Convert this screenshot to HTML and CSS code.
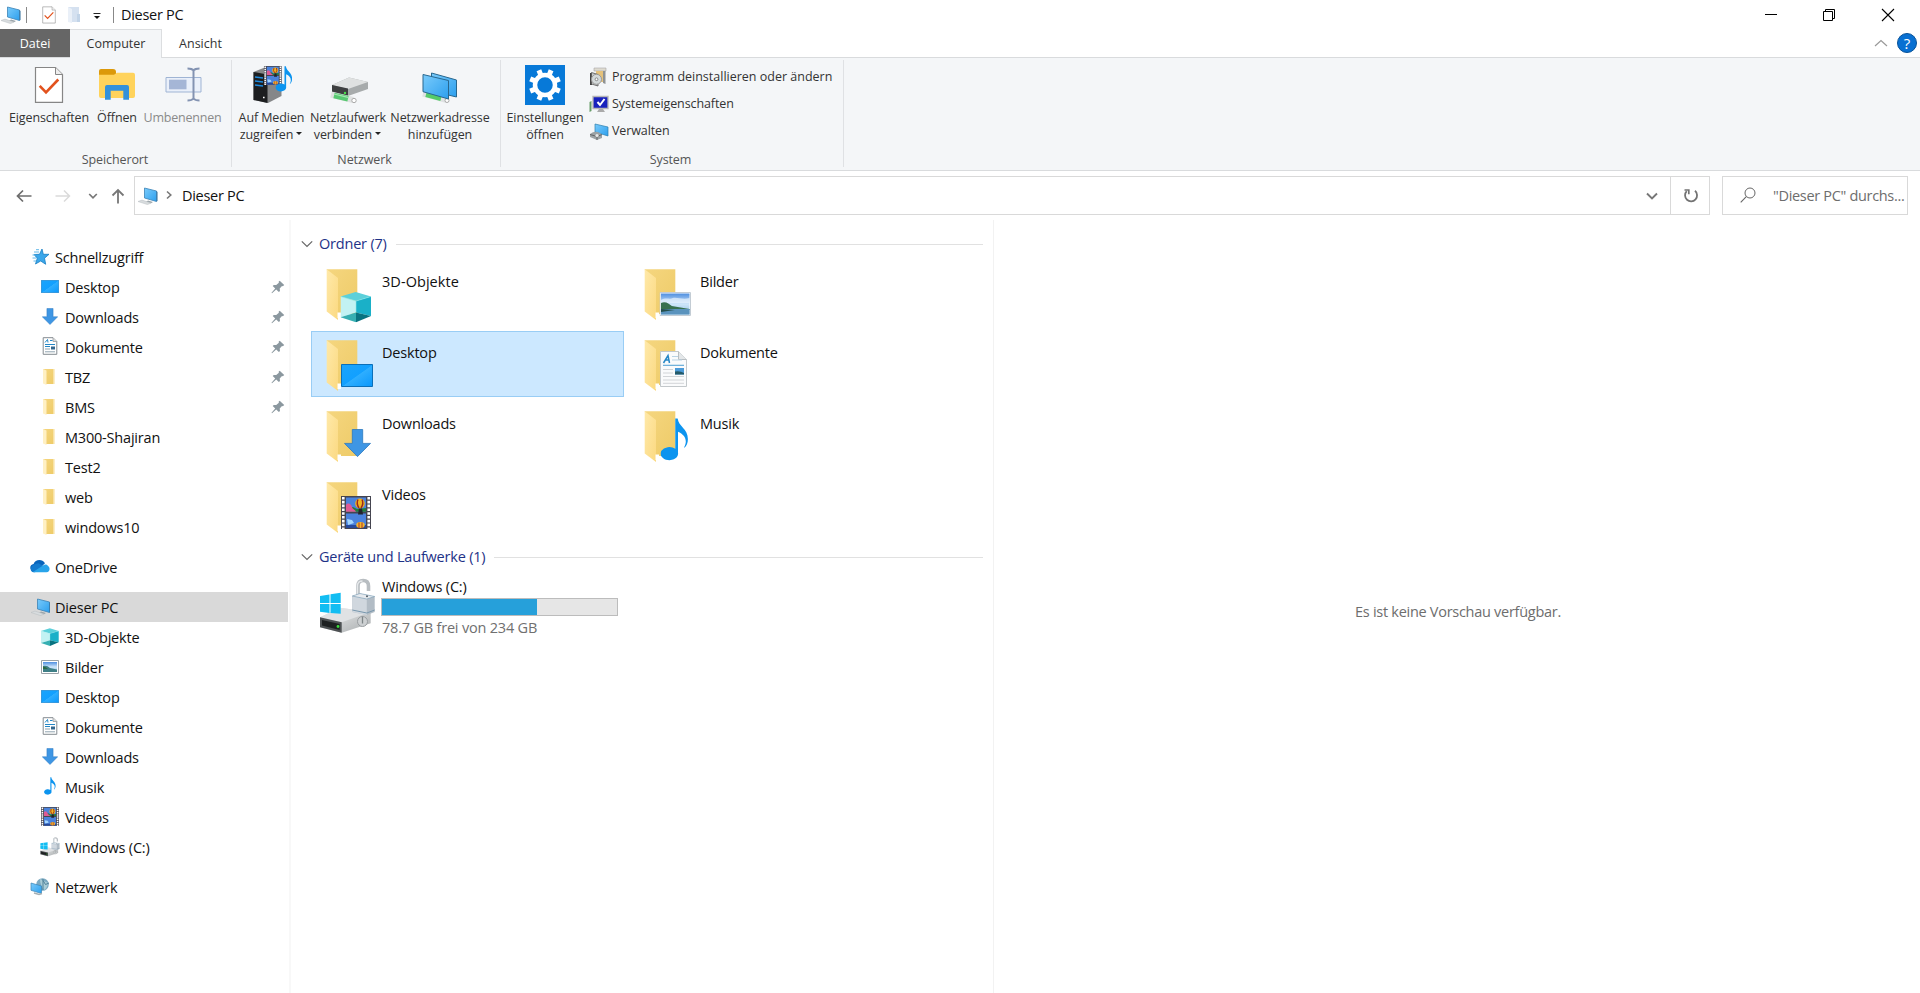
FILE: index.html
```html
<!DOCTYPE html>
<html lang="de">
<head>
<meta charset="utf-8">
<title>Dieser PC</title>
<link rel="stylesheet" href="styles.css">
</head>
<body>
<svg class="sprite" aria-hidden="true">
  <defs>
    <linearGradient id="gBack" x1="0" y1="0" x2="1" y2="1"><stop offset="0" stop-color="#f5d67f"/><stop offset="1" stop-color="#eecb68"/></linearGradient>
    <linearGradient id="gFlap" x1="0" y1="0" x2="1" y2="1"><stop offset="0" stop-color="#ffe9a9"/><stop offset="1" stop-color="#fbd981"/></linearGradient>
    <linearGradient id="gBlue" x1="0" y1="0" x2="1" y2="1"><stop offset="0" stop-color="#1ba4fb"/><stop offset=".5" stop-color="#12a0ff"/><stop offset=".52" stop-color="#2eaeff"/><stop offset="1" stop-color="#0a97fb"/></linearGradient>
    <linearGradient id="gScreen" x1="0" y1="0" x2="1" y2="1"><stop offset="0" stop-color="#7acbfb"/><stop offset="1" stop-color="#2c9fee"/></linearGradient>
    <linearGradient id="gMetal" x1="0" y1="0" x2="1" y2="1"><stop offset="0" stop-color="#f2f3f3"/><stop offset="1" stop-color="#a9adaf"/></linearGradient>
    <linearGradient id="gSky" x1="0" y1="0" x2="0" y2="1"><stop offset="0" stop-color="#4f8fe0"/><stop offset=".5" stop-color="#cfe6fa"/><stop offset="1" stop-color="#8fc0e6"/></linearGradient>
  </defs>
  <symbol id="pc" viewBox="0 0 20 18">
    <path d="M6.500 1 18.500 4V14.500L6.500 11z" fill="url(#gScreen)" stroke="#3c83b5" stroke-width=".8"/>
    <path d="M18.500 4 19.500 5V14l-1 .5z" fill="#2c6c99"/>
    <path d="M10 13.500l5 1.500-2 1.300-5-1.400z" fill="#9aa4aa"/>
    <path d="M0 14.500l4-1.400L13 16l-3.500 1.600z" fill="#d8dcde" stroke="#b7bdc1" stroke-width=".5"/>
  </symbol>
  <symbol id="check" viewBox="0 0 40 40">
    <path d="M6.500 2.500H26.500L33.500 9.500V37.300H6.500z" fill="#fff" stroke="#868686" stroke-width="1.200"/>
    <path d="M26.500 2.500V9.500H33.500" fill="#eee" stroke="#868686"/>
    <path d="M10.700 20.800 17 27.300 29.300 14.500" fill="none" stroke="#e2521d" stroke-width="2.600"/>
  </symbol>
  <symbol id="mini-folder" viewBox="0 0 20 20">
    <path d="M3 2H13.500V17H6z" fill="url(#gBack)"/><path d="M3 2l3.500 1.500V18L3 16.500z" fill="#fff0c4"/>
    <path d="M14 2v15" stroke="#f8dd92"/>
  </symbol>
  <symbol id="folder" viewBox="0 0 70 64">
    <path d="M14.700 8.300H45.300V53H25z" fill="url(#gBack)"/>
    <path d="M14.700 8.300 26 17V59L14.700 50.500z" fill="url(#gFlap)"/>
    <path d="M25.500 51.500h3.500V57h-3.500z" fill="#fff"/>
  </symbol>
  <symbol id="cube" viewBox="0 0 31 31">
    <path d="M15.200.5 30.500 5 15.500 9.500 0 5z" fill="#5cd0da"/>
    <path d="M0 5 15.500 9.500V21L0 25.800z" fill="#c2f2f3"/>
    <path d="M15.500 9.500 30.500 5V24.500L15.500 21z" fill="#1ab0c8"/>
    <path d="M0 25.800 15.500 21V30.800z" fill="#36afb2"/><path d="M15.500 21 30.500 24.500 15.500 30.800z" fill="#087380"/>
    <path d="M15.500 9.500V21M0 5 15.500 9.500 30.500 5" stroke="#8ee7ea" stroke-width=".6" fill="none"/>
  </symbol>
  <symbol id="desk" viewBox="0 0 32 23" preserveAspectRatio="none"><path d="M.5.5h31v22H.5z" fill="url(#gBlue)" stroke="#0b6fb8"/></symbol>
  <symbol id="down" viewBox="0 0 27 28"><path d="M8.300.5h10.400V14.400H26.500L13.500 27.600.5 14.400H8.300z" fill="#3e96e4" stroke="#2b78bf" stroke-width=".8"/></symbol>
  <symbol id="film" viewBox="0 0 30 33" preserveAspectRatio="none">
    <path d="M0 0h30v33H0z" fill="#454550"/>
    <path d="M2.300 1v32M27.700 1v32" stroke="#fff" stroke-width="2.600" stroke-dasharray="2.600 1.200"/>
    <path d="M5 1.500h20v14.200H5zM5 17.500h20V32H5z" fill="#4a82dc"/>
    <path d="M5 11h7l4 2 9-1v3.700H5z" fill="#247d3a"/><path d="M5 9c2-3 5-1 6 2s3 2 4 4.700H5z" fill="#de5a96"/>
    <ellipse cx="19" cy="7.500" rx="4.800" ry="5" fill="#f0b51e"/><path d="M17 3.500q-2 4 1 8.500M21 3.500q2 4-1 8.500" stroke="#9b281e" stroke-width="1.500" fill="none"/>
    <path d="M18 12.500h3l1 6h-5z" fill="#23242c"/><path d="M6 23l5 1 2 3-6 2z" fill="#a4d7ff"/>
    <path d="M5 29h20v3H5z" fill="#274a9c"/><ellipse cx="19.500" cy="29" rx="4.300" ry="3" fill="#f1b62e"/><path d="M18 26.500v5.500M21 26.500v5.500" stroke="#b13727"/>
  </symbol>
  <symbol id="picture" viewBox="0 0 32 24" preserveAspectRatio="none">
    <path d="M.5.5h31v23H.5z" fill="#fff" stroke="#c3ccd4"/><path d="M1.500 1.500h29v21h-29z" fill="url(#gSky)"/>
    <path d="M1.500 8c5-3 9 0 12-2 5-1 10 2 17 0v5h-29z" fill="#e9f4fd" opacity=".7"/>
    <path d="M1.500 11c5-2 8 1 11 3l18 3v1h-29z" fill="#37704f"/><path d="M1.500 17h29v5.500h-29z" fill="#5a93bd"/><path d="M1.500 17l14 1-14 2z" fill="#244f4c"/>
  </symbol>
  <symbol id="mini-picture" viewBox="0 0 18 14">
    <path d="M.5.5h17v13H.5z" fill="#fff" stroke="#9aa2a8"/><path d="M2 2h14v10H2z" fill="url(#gSky)"/>
    <path d="M2 6q4-1 7 2l7 1.500V12H2z" fill="#3e7f86"/><path d="M2 6.500q3 0 5 2.500H2z" fill="#2d6a45"/>
  </symbol>
  <symbol id="doc" viewBox="0 0 27 36">
    <path d="M.5.500H18.500L26.500 8.500V35.500H.5z" fill="#fafbfc" stroke="#c3c8cb"/><path d="M18.500.5V8.500h8" fill="#e4e7e9" stroke="#b9bec1"/>
    <path d="M3.500 12 8 4.500 9.500 12M5.500 9h4" fill="none" stroke="#2587c6" stroke-width="1.500"/>
    <path d="M12 5.500h6M12 9h10" stroke="#b9d3e4"/><path d="M3 14.300h21" stroke="#59a5d5" stroke-width="1.100"/>
    <path d="M3 18.500h10M3 22h10M3 25.500h21M3 29h21M3 32.300h21" stroke="#d2d5d8"/>
    <path d="M15 17h9v6.500h-9z" fill="#4b9bd9"/><path d="M15 20.500q5-1 9 1.500v1.500h-9z" fill="#255a68"/>
  </symbol>
  <symbol id="mini-doc" viewBox="0 0 16 18">
    <path d="M1.200.7H11l3.800 3.800V17.300H1.200z" fill="#fff" stroke="#848b90"/><path d="M11 .7v3.800h3.800" fill="#ddd" stroke="#899095" stroke-width=".7"/>
    <path d="M3 5.500 5.500 2.500 6 5.500M8 3.500h2.500M3 7.500h10M3 9.500h5" stroke="#2587c6" fill="none"/><path d="M9 9.500h4v3H9z" fill="#34678e"/><path d="M3 12h5M3 14.800h10" stroke="#8fa3af"/>
  </symbol>
  <symbol id="note" viewBox="0 0 28 44">
    <path d="M14.800.6h2.400C18.200 9 27.700 11 27.700 21.500c0 4-1.200 6.800-3.400 9-.4-.3-.5-.6-.2-1 3.500-7 .4-12.500-6.500-15.500V35.500A9 6.700 0 1 1 14.800 31.500z" fill="#0c94ef"/>
  </symbol>
  <symbol id="drive" viewBox="0 0 70 64">
    <path d="M8 44.300 28 34.700 58.700 39V50.300L29.700 59.700 8 54.300z" fill="url(#gMetal)"/>
    <path d="M8 44.300 28 34.700 58.700 39 29.700 49.300z" fill="#e0e2e4"/>
    <path d="M8 44.300 29.700 49.300V59.700L8 54.300z" fill="#4d5153"/><path d="M10 47 27.700 51V57L10 52.500z" fill="#1d2021"/><circle cx="26" cy="53.500" r="1.400" fill="#3ddb3d"/>
    <path d="M8 23 17.500 21.500V30H8zM18.500 21.300 28.700 19.700V30H18.500zM8 31h9.500v9L8 38.700zM18.500 31h10.200v9.700L18.500 40.100z" fill="#12bdf2"/>
    <path d="M46 23V13q0-5.500 5.200-5.500t5.300 5.500v5" fill="none" stroke="#b8bdc1" stroke-width="3.600"/><path d="M45.500 23V13q0-5 5-5" fill="none" stroke="#e5e8ea" stroke-width="1.400"/>
    <path d="M40.300 23 48 20.500 62.700 23.500V39L55 42 40.300 39z" fill="#b2bcc5"/><path d="M40.300 23l14.500 3V42l-14.500-3z" fill="#d0d7de"/><path d="M40.300 23 48 20.500l14.700 3-8 2.500z" fill="#e6eaee" stroke="#789cb5" stroke-width=".6"/>
    <path d="M40.300 37l14.500 3 7.900-3" stroke="#7897ad" fill="none"/><circle cx="55" cy="23.300" r="1" fill="#4e5b65"/>
    <circle cx="50.500" cy="48.500" r="5" fill="#cdd0d2" stroke="#999da0"/><path d="M50.500 43.500v7" stroke="#7e8588" stroke-width="1.300"/>
  </symbol>
  <symbol id="star" viewBox="0 0 20 20">
    <path d="M12 2 13.300 7.300h5.700L14.500 11.200 15.700 17.300 10.700 14 5.500 17 7.300 11.200 4 7.500 9.500 7.300z" fill="#3ba7ea" stroke="#187fc4" stroke-width=".8"/>
    <path d="M4 5h5M2.500 8h3M2.500 11h4M3.500 14h2.500M6 2.700h3" stroke="#62b8e9"/>
  </symbol>
  <symbol id="cloud" viewBox="0 0 20 14">
    <path d="M3.600 5C5 .5 12-.9 15 4.300L11 8 3.500 12C-1 11-.6 5.500 3.600 5z" fill="#0864bb"/>
    <path d="M8.500 4.200 15 8 5 13.200H3.500C0 13 0 8 2.500 6.500 4 5 7 4.600 8.500 4.200z" fill="#137ace"/>
    <path d="M3 13 13 6.500c2-1.500 4-1.300 5 .5 2.500 1.500 2 6-1.500 6.300H4.500z" fill="#29a4ea"/>
  </symbol>
  <symbol id="network" viewBox="0 0 20 20">
    <circle cx="12.500" cy="7.500" r="6.300" fill="#7ba9c1"/><path d="M10 2q4 2 8 4-1 6-4 7Q10 8 10 2z" fill="#a9ccd6"/><path d="M13 3.500l2.500 4L19 6M13 2v11" stroke="#4f8199" fill="none"/>
    <path d="M1 6 11.500 9V16.500L1 13.300z" fill="url(#gScreen)" stroke="#3b84b5" stroke-width=".7"/><path d="M4 16l5 1.500 3-1" stroke="#a5afb4" fill="none" stroke-width="1.500"/>
  </symbol>
  <symbol id="pin" viewBox="0 0 14 14"><path d="M8.700.7 13.200 5 11.900 6.200 11 5.900 8.700 8.500 9 11 7.900 12 5.200 9.400 1 13.200.5 12.800 4.200 8.500 1.700 6 2.800 4.900 5.200 5.100 7.900 2.700 7.600 1.800z" fill="#8b989f"/></symbol>
  <symbol id="chev" viewBox="0 0 12 12"><path d="M.8 3.300 6 8.500 11.200 3.300" fill="none" stroke="currentColor" stroke-width="1.200"/></symbol>
</svg>

<div class="window">
  <header class="titlebar">
    <svg class="t-pc"><use href="#pc"/></svg><i class="bar"></i>
    <svg class="t-check" viewBox="5 1 30 38"><use href="#check" width="40" height="40"/></svg>
    <svg class="t-folder" viewBox="0 0 14 18"><path d="M1 1h11v15H1z" fill="#d5e1f0"/><path d="M1 1l4 2v14l-4-1z" fill="#eaf0f8"/><path d="M10 8h3v8h-3z" fill="#c2d4e8"/></svg>
    <svg class="t-caret" viewBox="0 0 8 8"><path d="M.5 1.500h7" stroke="#222"/><path d="M1 4h6L4 7z" fill="#111"/></svg><i class="bar bar2"></i>
    <span class="title">Dieser PC</span>
    <div class="controls">
      <svg viewBox="0 0 14 14"><path d="M2 6.500h12" stroke="#000"/></svg>
      <svg viewBox="0 0 14 14"><path d="M1.500 3.500h9v9h-9zM3.500 3.500v-2h9v9h-2" fill="none" stroke="#000"/></svg>
      <svg viewBox="0 0 14 14"><path d="M1 1l12 12M13 1 1 13" stroke="#000" stroke-width="1.100"/></svg>
    </div>
  </header>
  <nav class="tabs">
    <span class="tab file">Datei</span><span class="tab active">Computer</span><span class="tab view">Ansicht</span>
    <div class="tab-end"><svg class="up-chev" viewBox="0 0 14 8"><path d="M1 7l6-5.500L13 7" fill="none" stroke="#999" stroke-width="1.200"/></svg><span class="help">?</span></div>
  </nav>
  <section class="ribbon">
    <div class="group g1">
      <div class="tools">
        <div class="tool w88"><svg class="big"><use href="#check"/></svg><span>Eigenschaften</span></div>
        <div class="tool w48"><svg class="big" viewBox="0 0 40 40"><path d="M2 6q0-2 2-2H16q3 0 3 3v3H2z" fill="#dc990a"/><path d="M2 9.700H17l3-2H36q2 0 2 2V31q0 2-2 2H4q-2 0-2-2z" fill="#ffd35c"/><path d="M8 34.700V22q0-2 2-2H30q2 0 2 2V34.700H26.300V25.700H13.700V34.700z" fill="#3391db"/></svg><span>Öffnen</span></div>
        <div class="tool w83 off"><svg class="big" viewBox="0 0 40 40"><path d="M3 12.500H38V27H3z" fill="#eaf0fa" stroke="#9fb4d4"/><path d="M6 14.700H23.500v9.600H6z" fill="#a5b6d6"/><path d="M24.500 3.500q4.500 0 6 2 1.500-2 6-2M24.500 35.500q4.500 0 6-2 1.500 2 6 2M30.500 5.500v28" fill="none" stroke="#8393b2" stroke-width="2"/></svg><span>Umbenennen</span></div>
      </div><div class="caption">Speicherort</div>
    </div>
    <div class="group g2">
      <div class="tools">
        <div class="tool w73"><svg class="big" viewBox="0 0 40 40"><path d="M1.500 7 14 2 29.500 5V31L16 38 1.500 35z" fill="#858789"/><path d="M1.500 7 15.500 9.500V38L1.500 35z" fill="#1c1e20"/><path d="M3 12l8 1M3 16l8 1M3 20l8 1" stroke="#1e8be0" stroke-width="1.300"/><path d="M11 32.500h1.600" stroke="#fff" stroke-width="1.500"/><use href="#film" x="11.800" y="1" width="18" height="19"/><use href="#note" x="23.500" y="1" width="17" height="26"/></svg><span>Auf Medien<br>zugreifen <b class="caret"></b></span></div>
        <div class="tool w80"><svg class="big" viewBox="0 0 40 40"><path d="M4 20 21 12.500 40 17V24L20 31 4 27z" fill="#a7abac"/><path d="M4 20 21 12.500 40 17 20 24z" fill="#dfe1e1"/><path d="M4 20 20 23.500V31L4 27z" fill="#3d3f40"/><circle cx="17" cy="28" r="1.200" fill="#4be14b"/><path d="M3 29.500 25 35" stroke="#e0e2e2" stroke-width="6"/><path d="M6 30.500 20 33.800" stroke="#58c872" stroke-width="5.500"/><path d="M6 29 20 32.300" stroke="#a4e9b0" stroke-width="1.200"/><circle cx="26" cy="35.500" r="2.200" fill="#fff" stroke="#aaa"/></svg><span>Netzlaufwerk<br>verbinden <b class="caret"></b></span></div>
        <div class="tool w104"><svg class="big" viewBox="0 0 40 40"><path d="M3 28.500 27 35" stroke="#dfe2e3" stroke-width="6"/><path d="M6 29.500 21 33.500" stroke="#55cb6a" stroke-width="5"/><circle cx="27" cy="35.500" r="2" fill="#fff" stroke="#aaa"/><path d="M11.500 8 36.500 15V32L11.500 26z" fill="url(#gScreen)" stroke="#28678e"/><path d="M3 9.500 28.500 15.500V34L3 26.700z" fill="url(#gScreen)" stroke="#28678e"/></svg><span>Netzwerkadresse<br>hinzufügen</span></div>
      </div><div class="caption">Netzwerk</div>
    </div>
    <div class="group g3">
      <div class="tools">
        <div class="tool w82"><svg class="big" viewBox="0 0 40 40"><path d="M0 0h40v40H0z" fill="#0779d8"/><g stroke="#fff" stroke-width="5"><path d="M20 4v32" transform="rotate(22.500 20 20)"/><path d="M20 4v32" transform="rotate(67.500 20 20)"/><path d="M20 4v32" transform="rotate(112.500 20 20)"/><path d="M20 4v32" transform="rotate(157.500 20 20)"/></g><circle cx="20" cy="20" r="10" fill="#0779d8" stroke="#fff" stroke-width="4.500"/></svg><span>Einstellungen<br>öffnen</span></div>
        <div class="list">
          <div><svg viewBox="0 0 20 20"><path d="M5 1h12v3H5z" fill="#dedbd0" stroke="#aaa" stroke-width=".6"/><path d="M7 4h9v11H7z" fill="#e5c27b"/><path d="M14 4h2.500v13l-2.500-1z" fill="#8f9395"/><path d="M1 6h2v12H1z" fill="#444"/><path d="M2.500 5.500 9 7.500V19L2.500 17z" fill="#c7caca" stroke="#555" stroke-width=".8"/><circle cx="7.500" cy="12.300" r="5" fill="#d4dadb" stroke="#999"/><circle cx="7.500" cy="12.300" r="1.400" fill="#fff" stroke="#888"/></svg><span class="wide">Programm deinstallieren oder ändern</span></div>
          <div><svg viewBox="0 0 20 20"><path d="M.5 8l2-1v10l-2 1z" fill="#679c69"/><path d="M4 2.500h15v12H4z" fill="#1721bd" stroke="#b6b6b6" stroke-width="1.300"/><path d="M8.500 8l2.500 3 4.500-6" fill="none" stroke="#fff" stroke-width="2"/><path d="M10 15h4l2 3H8z" fill="#aaa"/></svg><span>Systemeigenschaften</span></div>
          <div><svg viewBox="0 0 20 20"><path d="M6 3 19 6V15L6 11z" fill="url(#gScreen)" stroke="#2b7eae" stroke-width=".7"/><path d="M1 13q5-4 10-1l2 2v3l-5 2-7-3z" fill="#9ba2a5"/><path d="M1 13.500l7 2 5-2M8 15.500V19" stroke="#555" fill="none" stroke-width=".8"/><circle cx="8" cy="14.500" r="1.600" fill="#e7e9e9"/></svg><span>Verwalten</span></div>
        </div>
      </div><div class="caption">System</div>
    </div>
  </section>
  <section class="address-row">
    <svg class="arrow back" viewBox="0 0 16 14"><path d="M15.500 7H1.500M7 1.500 1.500 7 7 12.500" fill="none" stroke="#6d6d6d" stroke-width="1.700"/></svg>
    <svg class="arrow fwd" viewBox="0 0 16 14"><path d="M.5 7H14.500M9 1.500 14.500 7 9 12.500" fill="none" stroke="#dadada" stroke-width="1.500"/></svg>
    <svg class="recent" viewBox="0 0 10 10"><path d="M1.200 3 5 6.800 8.800 3" fill="none" stroke="#777" stroke-width="1.700"/></svg>
    <svg class="up" viewBox="0 0 14 16"><path d="M7 15.500V2M1.500 7.500 7 2 12.500 7.500" fill="none" stroke="#777" stroke-width="1.800"/></svg>
    <div class="address">
      <svg class="a-pc"><use href="#pc"/></svg>
      <svg class="a-chev" viewBox="0 0 8 10"><path d="M2 1.500 5.800 5 2 8.500" fill="none" stroke="#777" stroke-width="1.600"/></svg>
      <span>Dieser PC</span>
      <svg class="a-drop" viewBox="0 0 12 10"><path d="M1 2.500 6 7.500 11 2.500" fill="none" stroke="#777" stroke-width="1.900"/></svg>
      <div class="refresh"><svg viewBox="0 0 16 16"><path d="M3.700 3.200A6 6 0 1 0 12 2.800" fill="none" stroke="#737373" stroke-width="1.800"/><path d="M1.500 2h4.300v4.300" fill="none" stroke="#737373" stroke-width="1.700"/></svg></div>
    </div>
    <div class="search"><svg viewBox="0 0 16 16"><circle cx="10" cy="6" r="5" fill="none" stroke="#666"/><path d="M6.300 9.700.7 15.300" stroke="#666" stroke-width="1.100"/></svg><span>"Dieser PC" durchs...</span></div>
  </section>
  <main class="content">
    <aside class="tree">
      <div class="row top"><svg><use href="#star"/></svg><span>Schnellzugriff</span></div>
      <div class="row"><svg viewBox="0 0 20 20"><use href="#desk" x="1" y="3" width="18" height="13"/></svg><span>Desktop</span><svg class="pin"><use href="#pin"/></svg></div>
      <div class="row"><svg viewBox="0 0 20 20"><use href="#down" x="2" y="1" width="16" height="17"/></svg><span>Downloads</span><svg class="pin"><use href="#pin"/></svg></div>
      <div class="row"><svg viewBox="0 0 20 20"><use href="#mini-doc" x="2" y="0" width="16" height="18"/></svg><span>Dokumente</span><svg class="pin"><use href="#pin"/></svg></div>
      <div class="row"><svg><use href="#mini-folder"/></svg><span>TBZ</span><svg class="pin"><use href="#pin"/></svg></div>
      <div class="row"><svg><use href="#mini-folder"/></svg><span>BMS</span><svg class="pin"><use href="#pin"/></svg></div>
      <div class="row"><svg><use href="#mini-folder"/></svg><span>M300-Shajiran</span></div>
      <div class="row"><svg><use href="#mini-folder"/></svg><span>Test2</span></div>
      <div class="row"><svg><use href="#mini-folder"/></svg><span>web</span></div>
      <div class="row"><svg><use href="#mini-folder"/></svg><span>windows10</span></div>
      <div class="row top gap"><svg viewBox="0 0 20 20"><use href="#cloud" x="0" y="2" width="20" height="14"/></svg><span>OneDrive</span></div>
      <div class="row top gap selected"><svg viewBox="0 0 20 20"><use href="#pc" x="1" y="1" width="20" height="18"/></svg><span>Dieser PC</span></div>
      <div class="row"><svg viewBox="0 0 20 20"><use href="#cube" x="1" y="1" width="18" height="18"/></svg><span>3D-Objekte</span></div>
      <div class="row"><svg viewBox="0 0 20 20"><use href="#mini-picture" x="1" y="3" width="18" height="14"/></svg><span>Bilder</span></div>
      <div class="row"><svg viewBox="0 0 20 20"><use href="#desk" x="1" y="3" width="18" height="13"/></svg><span>Desktop</span></div>
      <div class="row"><svg viewBox="0 0 20 20"><use href="#mini-doc" x="2" y="0" width="16" height="18"/></svg><span>Dokumente</span></div>
      <div class="row"><svg viewBox="0 0 20 20"><use href="#down" x="2" y="1" width="16" height="17"/></svg><span>Downloads</span></div>
      <div class="row"><svg viewBox="0 0 20 20"><use href="#note" x="4" y="0" width="12" height="18"/></svg><span>Musik</span></div>
      <div class="row"><svg viewBox="0 0 20 20"><use href="#film" x="1" y="0" width="18" height="19"/></svg><span>Videos</span></div>
      <div class="row"><svg viewBox="7 6 57 55"><use href="#drive" width="70" height="64"/></svg><span>Windows (C:)</span></div>
      <div class="row top gap"><svg><use href="#network"/></svg><span>Netzwerk</span></div>
    </aside>
    <section class="files">
      <div class="heading"><svg><use href="#chev"/></svg><span>Ordner (7)</span><i></i></div>
      <div class="grid">
        <div class="item"><svg viewBox="0 0 70 64"><use href="#folder" width="70" height="64"/><use href="#cube" x="28.500" y="30.500" width="31" height="31"/></svg><span class="airy">3D-Objekte</span></div>
        <div class="item"><svg viewBox="0 0 70 64"><use href="#folder" width="70" height="64"/><use href="#picture" x="29.500" y="31" width="31.500" height="24"/></svg><span>Bilder</span></div>
        <div class="item chosen"><svg viewBox="0 0 70 64"><use href="#folder" width="70" height="64"/><use href="#desk" x="29" y="32" width="32" height="23"/></svg><span>Desktop</span></div>
        <div class="item"><svg viewBox="0 0 70 64"><use href="#folder" width="70" height="64"/><use href="#doc" x="30" y="19" width="27" height="36"/></svg><span>Dokumente</span></div>
        <div class="item"><svg viewBox="0 0 70 64"><use href="#folder" width="70" height="64"/><use href="#down" x="32" y="26" width="27" height="28"/></svg><span>Downloads</span></div>
        <div class="item"><svg viewBox="0 0 70 64"><use href="#folder" width="70" height="64"/><use href="#note" x="30.500" y="15" width="28" height="43"/></svg><span>Musik</span></div>
        <div class="item"><svg viewBox="0 0 70 64"><use href="#folder" width="70" height="64"/><use href="#film" x="29" y="22" width="30" height="33"/></svg><span>Videos</span></div>
      </div>
      <div class="heading second"><svg><use href="#chev"/></svg><span>Geräte und Laufwerke (1)</span><i></i></div>
      <div class="drive">
        <svg><use href="#drive"/></svg>
        <div class="info"><span>Windows (C:)</span><div class="meter"><div style="width:66%"></div></div><span class="free">78.7 GB frei von 234 GB</span></div>
      </div>
    </section>
    <section class="preview"><span>Es ist keine Vorschau verfügbar.</span></section>
  </main>
</div>
</body>
</html>
```

FILE: styles.css
```css
* { box-sizing: border-box; }
body { margin: 0; background: #fff; color: #111; font: 14.5px/20px "Open Sans", "Noto Sans", sans-serif; letter-spacing: -0.2px; overflow: hidden; }
svg { display: block; flex: none; }
.sprite { width: 0; height: 0; display: block; }
.window { height: 993px; display: flex; flex-direction: column; }

.titlebar { height: 29px; display: flex; align-items: center; padding-left: 1px; flex: none; }
.t-pc { width: 20px; height: 18px; }
.bar { width: 1px; height: 16px; background: #888; margin-left: 5px; }
.t-check { width: 14px; height: 18px; margin-left: 15px; }
.t-folder { width: 14px; height: 18px; margin-left: 11px; }
.t-caret { width: 8px; height: 8px; margin: 3px 0 0 12px; }
.bar2 { margin-left: 12px; }
.title { margin-left: 7px; letter-spacing: -0.3px; }
.controls { margin-left: auto; display: flex; gap: 45px; padding-right: 25px; }
.controls svg { width: 14px; height: 14px; }

.tabs { height: 29px; display: flex; flex: none; border-bottom: 1px solid #d9dbdd; font-size: 12.5px; letter-spacing: 0; color: #333; }
.tab { height: 28px; line-height: 29px; text-align: center; }
.file { width: 70px; background: #666; color: #fff; }
.active { width: 92px; height: 29px; line-height: 27px; padding-left: 1px; background: #f4f6f8; border: 1px solid #dcdee0; border-bottom: 0; border-left: 0; }
.view { width: 77px; }
.tab-end { margin-left: auto; display: flex; align-items: center; gap: 9px; padding-right: 3px; }
.up-chev { width: 14px; height: 8px; }
.help { width: 20px; height: 20px; border-radius: 50%; background: #0870d2; border: 1px solid #075299; color: #fff; font-size: 15px; line-height: 18px; text-align: center; }

.ribbon { height: 113px; display: flex; flex: none; background: #f4f6f8; border-bottom: 1px solid #d9dbdd; font-size: 12.5px; line-height: 17px; letter-spacing: -0.1px; color: #333; }
.group { margin: 2px 0 3px; border-right: 1px solid #dfe1e4; display: flex; flex-direction: column; justify-content: space-between; }
.g1 { width: 232px; padding-left: 5px; }
.g2 { width: 269px; padding-left: 3px; }
.g3 { width: 343px; padding-left: 3px; }
.tools { display: flex; padding-top: 5px; }
.tool { display: flex; flex-direction: column; align-items: center; text-align: center; white-space: nowrap; gap: 4px; }
.big { width: 40px; height: 40px; }
.off { color: #8a8a8a; letter-spacing: -0.2px; }
.w88 { width: 88px; } .w48 { width: 48px; } .w83 { width: 83px; } .w73 { width: 73px; }
.w80 { width: 80px; } .w104 { width: 104px; } .w82 { width: 82px; }
.caret { display: inline-block; border: 3.5px solid transparent; border-top-color: #222; border-bottom: 0; vertical-align: 4px; margin-right: 1px; }
.caption { text-align: center; color: #555; padding-right: 6px; margin-bottom: -1px; }
.list { display: flex; flex-direction: column; padding-left: 3px; }
.list div { display: flex; align-items: center; height: 27px; gap: 3px; white-space: nowrap; margin-top: -2px; margin-bottom: 2px; }
.list svg { width: 20px; height: 20px; }
.wide { letter-spacing: 0; }

.address-row { height: 49px; display: flex; align-items: center; flex: none; padding: 0 12px 1px 16px; }
.arrow { width: 16px; height: 14px; margin-top: 1px; }
.fwd { margin-left: 23px; }
.recent { width: 10px; height: 10px; margin-left: 17px; margin-top: 1px; }
.up { width: 14px; height: 16px; margin-left: 13px; margin-top: 2px; }
.address { flex: 1; height: 39px; margin-left: 9px; border: 1px solid #d9d9d9; display: flex; align-items: center; padding: 1px 0 0 3px; }
.a-pc { width: 20px; height: 18px; }
.a-chev { width: 8px; height: 10px; margin-left: 7px; margin-bottom: 2px; }
.address span { margin-left: 9px; padding-top: 1px; letter-spacing: -0.3px; }
.a-drop { width: 12px; height: 10px; margin-left: auto; }
.refresh { width: 39px; height: 37px; margin: -1px 0 0 12px; border-left: 1px solid #d9d9d9; display: flex; align-items: center; justify-content: center; padding: 1px 0 0 1px; }
.refresh svg { width: 16px; height: 16px; }
.search { width: 186px; height: 39px; margin-left: 12px; border: 1px solid #d9d9d9; display: flex; align-items: center; padding-left: 17px; color: #6d6d6d; white-space: nowrap; }
.search svg { width: 16px; height: 16px; }
.search span { margin-left: 17px; padding-top: 2px; letter-spacing: -0.32px; }

.content { flex: 1; display: flex; min-height: 0; }
.tree { width: 291px; border-right: 2px solid #f8f8f8; padding-top: 22px; flex: none; }
.row { height: 30px; width: 288px; display: flex; align-items: center; padding-left: 40px; gap: 5px; }
.row svg { width: 20px; height: 20px; }
.row span { padding-top: 2px; }
.row .pin { width: 14px; height: 14px; margin-left: auto; margin-right: 3px; }
.top { padding-left: 30px; }
.gap { margin-top: 10px; }
.selected { background: #d9d9d9; }

.files { width: 702px; flex: none; padding: 14px 10px 0 10px; }
.heading { height: 20px; display: flex; align-items: center; color: #1e3287; }
.heading svg { width: 12px; height: 12px; color: #666; }
.heading span { margin-left: 6px; white-space: nowrap; }
.heading i { flex: 1; height: 1px; background: #e1e1e1; margin-left: 9px; }
.grid { display: grid; grid-template-columns: 313px 313px; column-gap: 5px; row-gap: 5px; padding: 6px 0 0 10px; }
.item { height: 66px; display: flex; border: 1px solid transparent; }
.item svg { width: 70px; height: 64px; }
.item span { padding-top: 11px; }
.item .airy { letter-spacing: 0.05px; }
.chosen { background: #cce8ff; border-color: #99cdf5; }
.second { margin-top: 8px; }
.drive { display: flex; padding: 6px 0 0 11px; }
.drive > svg { width: 70px; height: 64px; }
.info { display: flex; flex-direction: column; padding-top: 4px; }
.meter { width: 237px; height: 18px; border: 1px solid #bcbcbc; background: #e6e6e6; margin: 1px 0 0 -1px; }
.meter div { height: 100%; background: #26a0da; }
.free { color: #707070; margin-top: 2px; }
.preview { flex: 1; border-left: 1px solid #f2f2f2; display: flex; justify-content: center; padding: 382px 0 0 2px; color: #6d6d6d; letter-spacing: -0.28px; }
```
